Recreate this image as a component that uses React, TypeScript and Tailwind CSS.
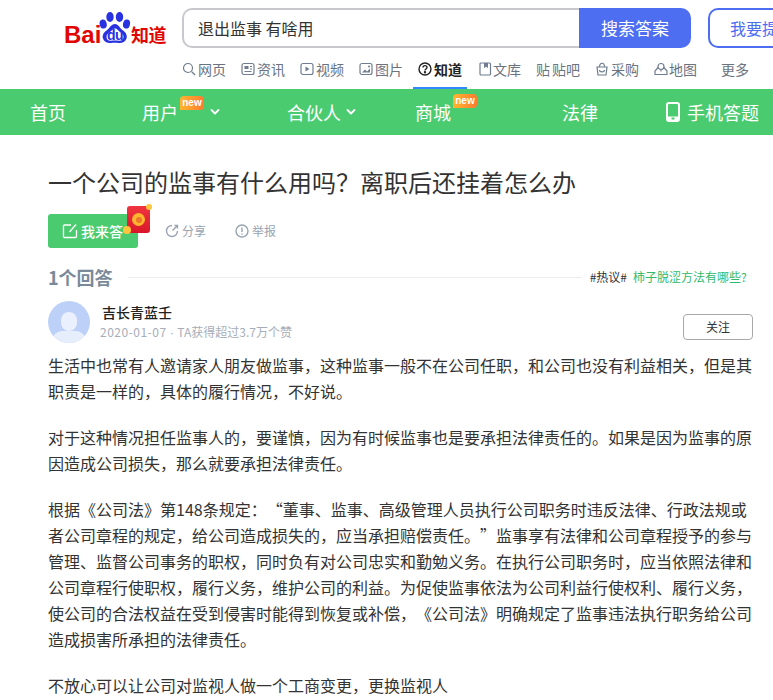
import React from "react";

const cjk = { fontFamily: '"Noto Sans CJK SC", "Liberation Sans", sans-serif' };

function Logo() {
  return (
    <div className="w-[103px] h-[48px] relative">
      <span className="absolute left-0 top-[23px] text-[24px] leading-[24px] font-bold text-[#e10602]" style={{ fontFamily: '"Liberation Sans", sans-serif' }}>Bai</span>
      <svg className="absolute left-[35px] top-[11px]" width="32" height="34" viewBox="0 0 32 34">
        <ellipse cx="11" cy="6" rx="3.700" ry="5" fill="#2932e1" />
        <ellipse cx="20.500" cy="6" rx="3.700" ry="5" fill="#2932e1" />
        <ellipse cx="4.200" cy="13" rx="3.500" ry="4.600" fill="#2932e1" transform="rotate(-12 4.200 13)" />
        <ellipse cx="27.500" cy="13" rx="3.500" ry="4.600" fill="#2932e1" transform="rotate(12 27.500 13)" />
        <path d="M16 13c-4 0-5 4-8.500 6.500C4.500 21.500 3 24.500 4 27.500c1 3.500 5 5 8 4.500 2.500-.4 5-.4 7.500 0 3 .5 7-1 8-4.500 1-3-.5-6-3.500-8-3.500-2.500-4.500-6.500-8-6.500z" fill="#2932e1" />
        <path d="M16 17.500c-2 0-3 2-5 3.500-2.500 1.500-3.500 3-3.500 5 0 2.500 2 4 4.500 3.700 2.500-.4 5.500-.4 8 0 2.500.3 4.500-1.200 4.500-3.700 0-2-1-3.500-3.500-5-2-1.500-3-3.500-5-3.500z" fill="#fff" />
      </svg>
      <span className="absolute left-[43px] top-[29px] text-[14px] leading-[13px] font-bold text-[#2932e1] tracking-[-0.5px]" style={{ fontFamily: '"Liberation Sans", sans-serif' }}>du</span>
      <span className="absolute left-[67px] top-[22px] text-[18px] leading-[24px] font-bold text-[#e10602] tracking-[-0.5px]" style={cjk}>知道</span>
    </div>
  );
}

function Ic({ children }: { children: React.ReactNode }) {
  return (
    <svg width="14" height="14" viewBox="0 0 14 14" fill="none" stroke="#6f7d8f" strokeWidth="1.200" className="shrink-0">
      {children}
    </svg>
  );
}

function Tab({ label, icon }: { label: string; icon: React.ReactNode }) {
  return (
    <div className="w-[59px] shrink-0 flex items-center gap-[2px] text-[14px] leading-[20px] text-[#6b7380]">
      {icon}
      <span>{label}</span>
    </div>
  );
}

function NewBadge({ className }: { className: string }) {
  return (
    <span className={`absolute -right-[26px] w-[24px] h-[14px] rounded-[4px] rounded-bl-none bg-gradient-to-r from-[#ffb52e] to-[#ff7a30] text-white text-[10px] leading-[13px] font-bold text-center ${className}`} style={{ fontFamily: '"Liberation Sans", sans-serif' }}>new</span>
  );
}

function Chevron() {
  return (
    <svg width="10" height="6" viewBox="0 0 10 6" fill="none" stroke="#fff" strokeWidth="1.800" strokeLinecap="round" strokeLinejoin="round">
      <path d="M1.500 1l3.500 3.500L8.500 1" />
    </svg>
  );
}

function Para({ children }: { children: React.ReactNode }) {
  return <p className="text-[16px] leading-[26px] text-[#333] [text-spacing-trim:space-all]">{children}</p>;
}

export default function App() {
  return (
    <div className="w-[773px] h-[700px] overflow-hidden bg-white" style={cjk}>
      <header className="h-[89px] flex flex-col">
        <div className="flex items-start h-[56px]">
          <div className="ml-[64px] w-[118px] shrink-0"><Logo /></div>
          <div className="w-[509px] h-[40px] mt-[8px] flex shrink-0">
            <div className="flex-1 border-2 border-r-0 border-[#c8c9cc] rounded-l-[10px] flex items-center pl-[14px] text-[16px] text-[#333]">退出监事 有啥用</div>
            <div className="w-[112px] bg-[#4e6ef2] rounded-r-[10px] text-white text-[17px] flex items-center justify-center">搜索答案</div>
          </div>
          <div className="ml-[17px] mt-[8px] w-[100px] h-[40px] border-2 border-[#4e6ef2] rounded-[10px] shrink-0 text-[#4e6ef2] text-[16px] flex items-center pl-[20px] whitespace-nowrap">我要提问</div>
        </div>
        <div className="flex items-center h-[27px] pl-[182px] pb-[1px]">
          <Tab label="网页" icon={<Ic><circle cx="6" cy="6" r="4.500" /><path d="M9.500 9.500L13 13" /></Ic>} />
          <Tab label="资讯" icon={<Ic><rect x="1" y="1.500" width="12" height="11" rx="2" /><rect x="3.500" y="4" width="4" height="3" fill="#6f7d8f" stroke="none" /><path d="M9 4.500h2M9 7h2M3.500 9.500h7" /></Ic>} />
          <Tab label="视频" icon={<Ic><rect x="1" y="1.500" width="12" height="11" rx="2" /><path d="M5.500 4.500l4 2.500-4 2.500z" fill="#6f7d8f" stroke="none" /></Ic>} />
          <Tab label="图片" icon={<Ic><rect x="1" y="1.500" width="12" height="11" rx="2" /><path d="M3 10.500l3-3 2 2 3-3v4z" fill="#6f7d8f" stroke="none" /><circle cx="10" cy="4.500" r="1" fill="#6f7d8f" stroke="none" /></Ic>} />
          <div className="flex items-center gap-[2px] text-[14px] leading-[20px] font-bold text-[#222] w-[60px] shrink-0">
            <svg width="14" height="14" viewBox="0 0 14 14" fill="none" stroke="#222" strokeWidth="1.400"><circle cx="7" cy="7" r="6" /><path d="M5 5.500c0-2.500 4-2.500 4 0 0 1.500-2 1.500-2 3" /><circle cx="7" cy="10.300" r=".5" fill="#222" /></svg>
            <span>知道</span>
          </div>
          <div className="w-[58px] shrink-0 flex items-center gap-[1px] text-[14px] leading-[20px] text-[#6b7380]">
            <Ic><path d="M3 1h8.500a1 1 0 011 1v10a1 1 0 01-1 1H3a1 1 0 01-1-1V2a1 1 0 011-1z" /><path d="M6 1h4v5l-2-1.200L6 6z" fill="#6f7d8f" stroke="none" /></Ic>
            <span>文库</span>
          </div>
          <Tab label="贴吧" icon={<span className="w-[14px] text-center">贴</span>} />
          <Tab label="采购" icon={<Ic><path d="M2 5h10l-1 8H3z" /><path d="M4.500 5c0-5 5-5 5 0" /><path d="M4.500 8c0 2.500 5 2.500 5 0" /></Ic>} />
          <div className="w-[67px] shrink-0 flex items-center gap-[1px] text-[14px] leading-[20px] text-[#6b7380]">
            <Ic><circle cx="7" cy="4.500" r="3" /><path d="M4 5.500L1 9v3.500h12V9l-3-3.500M7 7.500v2" /></Ic>
            <span>地图</span>
          </div>
          <span className="text-[14px] leading-[20px] text-[#6b7380]">更多</span>
        </div>
      </header>
      <div className="relative h-0"><div className="absolute left-[413px] -top-[2px] w-[54px] h-[2px] bg-[#3388ff]" /></div>
      <nav className="h-[46px] bg-[#4bcb70] text-white text-[18px] flex items-center whitespace-nowrap">
        <span className="ml-[30px] w-[112px] shrink-0">首页</span>
        <div className="flex items-center w-[145px] shrink-0"><span className="relative">用户<NewBadge className="top-[-3px]" /></span><span className="ml-[32px]" /><Chevron /></div>
        <div className="flex items-center w-[128px] shrink-0"><span>合伙人</span><span className="ml-[5px]" /><Chevron /></div>
        <span className="w-[147px] shrink-0"><span className="relative">商城<NewBadge className="top-[-5px]" /></span></span>
        <span className="w-[104px] shrink-0">法律</span>
        <svg width="14" height="20" viewBox="0 0 14 20" fill="none" className="mr-[7px] shrink-0"><rect x="1" y="1" width="12" height="18" rx="2" stroke="#fff" strokeWidth="2" /><rect x="1" y="14.500" width="12" height="4" fill="#fff" /><rect x="5.500" y="15.500" width="3" height="2" fill="#4bcb70" /></svg>
        <span>手机答题</span>
      </nav>
      <main className="pl-[48px] pr-[20px]">
        <h1 className="pt-[30px] text-[24px] leading-[34px] text-[#333] font-normal">一个公司的监事有什么用吗？离职后还挂着怎么办</h1>
        <div className="flex items-center mt-[15px] h-[34px]">
          <div className="relative w-[90px] h-[34px] bg-[#4bcb70] rounded-[3px] text-white text-[14px] font-medium flex items-center pl-[14px] gap-[3px]">
            <svg width="16" height="16" viewBox="0 0 16 16" fill="none" stroke="#fff" strokeWidth="1.300"><path d="M9 2H2.500a1 1 0 00-1 1v10.500a1 1 0 001 1h11a1 1 0 001-1V7" /><path d="M14 1.500L7.500 9" /></svg>
            <span>我来答</span>
            <div className="absolute left-[79px] -top-[8px] w-[23px] h-[27px] bg-gradient-to-b from-[#f0343f] to-[#d9142a] rounded-[3px] flex items-center justify-center">
              <span className="w-[13px] h-[13px] rounded-full bg-[#ffb52e] flex items-center justify-center"><span className="w-[6px] h-[6px] bg-[#f0762c] rounded-full" /></span>
              <span className="absolute -right-[2px] -top-[2px] w-[6px] h-[6px] rounded-full bg-[#ffc53d]" />
              <span className="absolute -left-[4px] bottom-[-1px] w-[8px] h-[8px] rounded-full bg-[#ffc53d]" />
            </div>
          </div>
          <div className="ml-[27px] flex items-center gap-[3px] text-[12px] text-[#9aa4b1]">
            <svg width="14" height="14" viewBox="0 0 14 14" fill="none" stroke="#9aa4b1" strokeWidth="1.400"><path d="M7 1.500A5.500 5.500 0 1012.500 7" /><path d="M12.500 1.500L7.500 6.500" /><path d="M9.500 1.500h3v3" /></svg>
            <span>分享</span>
          </div>
          <div className="ml-[29px] flex items-center gap-[3px] text-[12px] text-[#9aa4b1]">
            <svg width="14" height="14" viewBox="0 0 14 14" fill="none" stroke="#9aa4b1" strokeWidth="1.400"><circle cx="7" cy="7" r="6" /><path d="M7 3.500v4.500M7 9.500v1.200" /></svg>
            <span>举报</span>
          </div>
        </div>
        <div className="flex items-center mt-[16px] h-[26px]">
          <span className="text-[18px] font-bold text-[#7a8a9a] leading-[26px] shrink-0">1个回答</span>
          <div className="ml-[15px] w-[454px] h-px bg-[#ececec] shrink-0" />
          <span className="text-[12px] text-[#333] pl-[8px] whitespace-nowrap">#热议#</span>
          <span className="text-[12px] text-[#30b96b] ml-[6px] whitespace-nowrap">柿子脱涩方法有哪些?</span>
        </div>
        <div className="flex items-center mt-[11px] h-[42px]">
          <div className="w-[42px] h-[42px] rounded-full bg-[#bcd0f8] overflow-hidden relative shrink-0">
            <div className="absolute left-[13px] top-[11px] w-[16px] h-[19px] rounded-full bg-[#eaf0fd]" />
            <div className="absolute left-[4px] top-[30px] w-[34px] h-[20px] rounded-full bg-[#e6eefc]" />
          </div>
          <div className="ml-[10px] flex-1">
            <div className="ml-[2px] text-[14px] leading-[18px] text-[#222] font-medium">吉长青蓝壬</div>
            <div className="text-[12px] leading-[18px] mt-[2px] text-[#a6adb8]"><span className="tracking-[0.5px]">2020-01-07</span><span style={{ fontFamily: '"Liberation Sans", sans-serif' }}> · </span>TA获得超过3.7万个赞</div>
          </div>
          <div className="w-[70px] h-[26px] mt-[10px] border border-[#a8a8a8] rounded-[4px] text-[12px] text-[#333] flex items-center justify-center">关注</div>
        </div>
        <div className="mt-[9px] flex flex-col gap-[20px]">
          <Para>生活中也常有人邀请家人朋友做监事，这种监事一般不在公司任职，和公司也没有利益相关，但是其职责是一样的，具体的履行情况，不好说。</Para>
          <Para>对于这种情况担任监事人的，要谨慎，因为有时候监事也是要承担法律责任的。如果是因为监事的原因造成公司损失，那么就要承担法律责任。</Para>
          <Para>根据《公司法》第148条规定：“董事、监事、高级管理人员执行公司职务时违反法律、行政法规或者公司章程的规定，给公司造成损失的，应当承担赔偿责任。”监事享有法律和公司章程授予的参与管理、监督公司事务的职权，同时负有对公司忠实和勤勉义务。在执行公司职务时，应当依照法律和公司章程行使职权，履行义务，维护公司的利益。为促使监事依法为公司利益行使权利、履行义务，使公司的合法权益在受到侵害时能得到恢复或补偿，《公司法》明确规定了监事违法执行职务给公司造成损害所承担的法律责任。</Para>
          <Para>不放心可以让公司对监视人做一个工商变更，更换监视人</Para>
        </div>
      </main>
    </div>
  );
}
